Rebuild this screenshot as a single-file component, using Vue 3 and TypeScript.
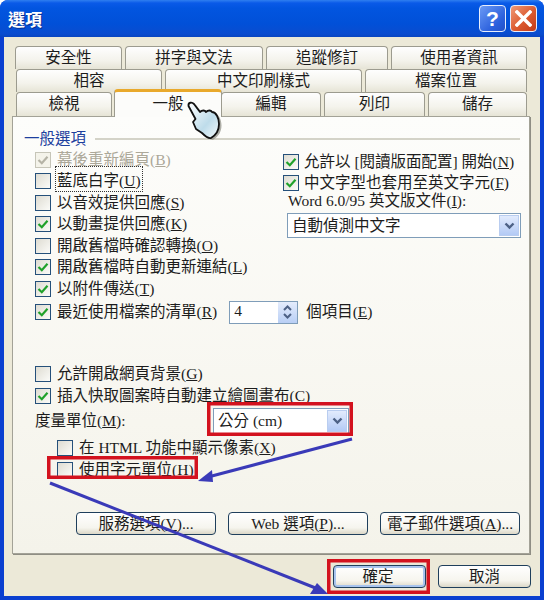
<template>
  <div class="window">
    <header class="titlebar">
      <span class="title">選項</span>
      <div class="title-buttons">
        <span class="cap help">?</span>
        <span class="cap close">
          <svg width="17" height="17" viewBox="0 0 17 17">
            <path d="M2 2 L15 15 M15 2 L2 15" stroke="#fff" stroke-width="3.4" stroke-linecap="square" />
          </svg>
        </span>
      </div>
    </header>

    <div class="client">
      <div class="tabs">
        <div v-for="(row, i) in tabRows" :key="i" :class="['tab-row', 'tab-row-' + i]">
          <div
            v-for="tab in row"
            :key="tab.label"
            :class="['tab', { active: tab.label === currentTab }]"
            :style="{ width: tab.width + 'px' }"
          >
            {{ tab.label }}
          </div>
        </div>
      </div>

      <section class="panel">
        <div class="legend">
          <span class="legend-text">一般選項</span>
          <i class="legend-line"></i>
        </div>

        <div class="top-grid">
          <div class="col">
            <label v-for="c in leftChecks" :key="c.text" :class="['check-row', { disabled: c.disabled }]">
              <span :class="['box', { off: c.disabled }]">
                <svg v-if="c.checked" width="12" height="12" viewBox="0 0 12 12">
                  <path d="M1.5 6 L4.8 9.2 L10.5 2.8" fill="none" stroke-width="2.2" />
                </svg>
              </span>
              <span :class="['txt', { focused: c.focused }]">{{ c.text }}(<u>{{ c.key }}</u>)</span>
            </label>
            <div class="check-row recent">
              <span class="box">
                <svg width="12" height="12" viewBox="0 0 12 12">
                  <path d="M1.5 6 L4.8 9.2 L10.5 2.8" fill="none" stroke-width="2.2" />
                </svg>
              </span>
              <span class="txt">最近使用檔案的清單(<u>R</u>)</span>
              <span class="spin-input">
                <span class="spin-value">4</span>
                <span class="spin">
                  <svg width="11" height="18" viewBox="0 0 11 18">
                    <path d="M2 7 L5.5 3.5 L9 7 M2 11 L5.5 14.5 L9 11" fill="none" stroke="#4d6185" stroke-width="2" />
                  </svg>
                </span>
              </span>
              <span class="txt recent-unit">個項目(<u>E</u>)</span>
            </div>
          </div>

          <div class="col right">
            <label v-for="c in rightChecks" :key="c.text" class="check-row">
              <span class="box">
                <svg width="12" height="12" viewBox="0 0 12 12">
                  <path d="M1.5 6 L4.8 9.2 L10.5 2.8" fill="none" stroke-width="2.2" />
                </svg>
              </span>
              <span class="txt">{{ c.text }}(<u>{{ c.key }}</u>)</span>
            </label>
            <div class="word-label">Word 6.0/95 英文版文件(<u>I</u>):</div>
            <div class="select word-select">
              <span class="txt">自動偵測中文字</span>
              <span class="select-btn">
                <svg width="11" height="8" viewBox="0 0 11 8">
                  <path d="M1.5 1.5 L5.5 5.5 L9.5 1.5" fill="none" stroke="#4d6185" stroke-width="2.4" />
                </svg>
              </span>
            </div>
          </div>
        </div>

        <div class="lower">
          <label class="check-row">
            <span class="box"></span>
            <span class="txt">允許開啟網頁背景(<u>G</u>)</span>
          </label>
          <label class="check-row">
            <span class="box">
              <svg width="12" height="12" viewBox="0 0 12 12">
                <path d="M1.5 6 L4.8 9.2 L10.5 2.8" fill="none" stroke-width="2.2" />
              </svg>
            </span>
            <span class="txt">插入快取圖案時自動建立繪圖畫布(<u>C</u>)</span>
          </label>
          <div class="unit-row">
            <span class="txt unit-label">度量單位(<u>M</u>):</span>
            <div class="select unit-select">
              <span class="txt">公分 (cm)</span>
              <span class="select-btn">
                <svg width="11" height="8" viewBox="0 0 11 8">
                  <path d="M1.5 1.5 L5.5 5.5 L9.5 1.5" fill="none" stroke="#4d6185" stroke-width="2.4" />
                </svg>
              </span>
            </div>
          </div>
          <label class="check-row indent first-indent">
            <span class="box"></span>
            <span class="txt">在 HTML 功能中顯示像素(<u>X</u>)</span>
          </label>
          <label class="check-row indent">
            <span class="box"></span>
            <span class="txt">使用字元單位(<u>H</u>)</span>
          </label>
        </div>

        <div class="panel-buttons">
          <button class="btn wide"><span class="txt">服務選項(<u>V</u>)...</span></button>
          <button class="btn wide"><span class="txt">Web 選項(<u>P</u>)...</span></button>
          <button class="btn wide"><span class="txt">電子郵件選項(<u>A</u>)...</span></button>
        </div>
      </section>

      <footer class="dialog-buttons">
        <button class="btn main default"><span class="txt">確定</span></button>
        <button class="btn main"><span class="txt">取消</span></button>
      </footer>
    </div>

    <!-- hand-drawn annotations on top of the dialog -->
    <svg class="notes" width="544" height="600" viewBox="0 0 544 600">
      <defs>
        <linearGradient id="hand" x1="0" y1="0" x2="1" y2="1">
          <stop offset="0" stop-color="#ffffff" />
          <stop offset="0.6" stop-color="#bedcea" />
          <stop offset="1" stop-color="#f4fafc" />
        </linearGradient>
      </defs>
      <g fill="none" stroke="#d3121e" stroke-width="3.5">
        <rect x="208.75" y="403.75" width="142.5" height="30.5" />
        <rect x="48.75" y="457.75" width="147.5" height="19.5" />
        <rect x="328.75" y="560.75" width="99.5" height="31.5" />
      </g>
      <g stroke="#3a3ab8" stroke-width="3" fill="#3a3ab8">
        <line x1="352" y1="439" x2="208" y2="477" />
        <line x1="50" y1="483" x2="318" y2="589" />
        <polygon stroke="none" points="198,481 212,470 213,482" />
        <polygon stroke="none" points="328,594 317,583 310,594" />
      </g>
      <!-- pointer hand -->
      <path
        d="M188.5 106 C188 102 192 102 194 104 L200 112 C202 110 205 110 206 112 C208 110 211 110 212 112 C216 112 219 118 219 124 C219 130 216 135 211 138 C208 139 205 136 202 133 L196 129 L193 122 L195.5 119 Z"
        fill="#7c7c72"
        opacity="0.6"
        transform="translate(2.5 1.5)"
      />
      <path
        d="M188.5 106 C188 102 192 102 194 104 L200 112 C202 110 205 110 206 112 C208 110 211 110 212 112 C216 112 219 118 219 124 C219 130 216 135 211 138 C208 139 205 136 202 133 L196 129 L193 122 L195.5 119 Z"
        fill="url(#hand)"
        stroke="#111"
        stroke-width="1.8"
        stroke-linejoin="round"
      />
    </svg>
  </div>
</template>

<script setup lang="ts">
import { ref } from "vue";

interface ITab {
  label: string;
  width: number;
}

interface ICheck {
  text: string;
  key: string;
  checked?: boolean;
  disabled?: boolean;
  focused?: boolean;
}

const currentTab = ref("一般");

const tabRows: ITab[][] = [
  [
    { label: "安全性", width: 107 },
    { label: "拼字與文法", width: 138 },
    { label: "追蹤修訂", width: 122 },
    { label: "使用者資訊", width: 136 },
  ],
  [
    { label: "相容", width: 146 },
    { label: "中文印刷樣式", width: 197 },
    { label: "檔案位置", width: 162 },
  ],
  [
    { label: "檢視", width: 96 },
    { label: "一般", width: 108 },
    { label: "編輯", width: 100 },
    { label: "列印", width: 101 },
    { label: "儲存", width: 99 },
  ],
];

const leftChecks: ICheck[] = [
  { text: "幕後重新編頁", key: "B", checked: true, disabled: true },
  { text: "藍底白字", key: "U", focused: true },
  { text: "以音效提供回應", key: "S" },
  { text: "以動畫提供回應", key: "K", checked: true },
  { text: "開啟舊檔時確認轉換", key: "O" },
  { text: "開啟舊檔時自動更新連結", key: "L", checked: true },
  { text: "以附件傳送", key: "T", checked: true },
];

const rightChecks: ICheck[] = [
  { text: "允許以 [閱讀版面配置] 開始", key: "N", checked: true },
  { text: "中文字型也套用至英文字元", key: "F", checked: true },
];
</script>

<style>
html,
body {
  margin: 0;
  background: #fff;
}
</style>

<style scoped>
.window {
  position: relative;
  width: 544px;
  height: 600px;
  overflow: hidden;
  font-family: "Liberation Serif", "Noto Sans CJK TC", serif;
  font-size: 15.5px;
  color: #1c1c1c;
  display: flex;
  flex-direction: column;
  background: #0a3fd0;
  border-radius: 8px 8px 0 0;
}

.titlebar {
  height: 37px;
  flex: none;
  display: flex;
  align-items: center;
  justify-content: space-between;
  padding: 0 7px 0 8px;
  box-sizing: border-box;
  background: linear-gradient(#2f7ff0 0, #0a5ae8 3px, #0255e0 8px, #0150d8 24px, #0a4ccf 34px, #0845c0 37px);
}

.title {
  font-family: "Noto Sans CJK TC", sans-serif;
  font-weight: 700;
  font-size: 17px;
  color: #fff;
  text-shadow: 1px 1px 0 #0a2f90;
}

.title-buttons {
  display: flex;
  gap: 4px;
}

.cap {
  width: 25px;
  height: 25px;
  border: 1px solid #e8eefc;
  border-radius: 4px;
  display: flex;
  align-items: center;
  justify-content: center;
  color: #fff;
  font-family: "Liberation Sans", sans-serif;
  font-weight: 700;
  font-size: 21px;
}

.help {
  background: linear-gradient(135deg, #6a9af5, #2a5fdc 70%, #2250c8);
}

.close {
  background: linear-gradient(135deg, #ef9a78, #dc5a30 55%, #c23a18);
}

.client {
  flex: 1;
  margin: 0 4px 4px;
  background: #ece9d8;
  padding-top: 9px;
  display: flex;
  flex-direction: column;
  min-height: 0;
}

.tabs {
  height: 70px;
  flex: none;
  display: flex;
  flex-direction: column;
}

.tab-row {
  display: flex;
  height: 23px;
  gap: 3px;
  margin-left: 12px;
}

.tab-row-0 {
  margin-left: 11px;
}

.tab-row-2 {
  height: 24px;
  gap: 0;
}

.tab {
  box-sizing: border-box;
  height: 100%;
  flex: none;
  text-align: center;
  line-height: 21px;
  background: linear-gradient(#fefefe, #f4f3ec 60%, #e6e4d6);
  border: 1px solid #9c9b8f;
  border-bottom: none;
  border-radius: 4px 4px 0 0;
}

.tab-row-2 .tab {
  margin-right: 3px;
}

.tab-row-2 .tab.active {
  position: relative;
  z-index: 2;
  height: 28px;
  margin: -3px -1px 0 -1px;
  background: #fcfcfa;
  border-top: 3px solid #e9a92c;
  line-height: 23px;
}

.panel {
  position: relative;
  height: 438px;
  flex: none;
  margin: 0 10px 0 8px;
  box-sizing: border-box;
  padding: 12px 9px 18px 22px;
  border: 1px solid #a3a297;
  box-shadow: 1px 1px 0 #8f8e84;
  background: linear-gradient(#fdfdfb, #f7f6ef 70%, #f4f3ea);
  display: flex;
  flex-direction: column;
}

.legend {
  height: 20px;
  margin-left: -11px;
  display: flex;
  align-items: center;
  gap: 9px;
  color: #1d3f9e;
}

.legend-text {
  padding-bottom: 4px;
}

.legend-line {
  flex: 1;
  height: 2px;
  background: #d4d3c8;
}

.top-grid {
  display: grid;
  grid-template-columns: 248px 1fr;
}

.col {
  display: flex;
  flex-direction: column;
  min-width: 0;
}

.txt {
  position: relative;
  top: -2px;
}

.check-row {
  height: 21.5px;
  display: flex;
  align-items: center;
  gap: 6px;
  white-space: nowrap;
}

.check-row.disabled {
  color: #aca899;
}

.box {
  box-sizing: border-box;
  width: 16px;
  height: 16px;
  flex: none;
  border: 1.5px solid #25507a;
  background: linear-gradient(135deg, #dedcd2, #fbfbf8);
  display: flex;
  align-items: center;
  justify-content: center;
}

.box svg {
  stroke: #1fa12a;
}

.box.off {
  border-color: #c6c5b8;
  background: #f4f3ea;
}

.box.off svg {
  stroke: #b5b3a6;
}

.focused {
  outline: 1px dotted #333;
  outline-offset: 1px;
}

.recent {
  height: 23px;
  margin-top: 1px;
}

.spin-input {
  box-sizing: border-box;
  width: 69px;
  height: 23px;
  margin-left: 6px;
  flex: none;
  border: 1px solid #7f9db9;
  background: #fff;
  display: flex;
  align-items: stretch;
  justify-content: space-between;
}

.spin-value {
  padding-left: 4px;
  line-height: 18px;
}

.spin {
  width: 19px;
  background: linear-gradient(#e4ecfc, #b9cff5);
  display: flex;
  align-items: center;
  justify-content: center;
}

.recent-unit {
  margin-left: 2px;
}

.right {
  padding-top: 2px;
}

.right .word-label {
  height: 18px;
  line-height: 16px;
  margin-left: 5px;
  white-space: nowrap;
}

.right .check-row {
  height: 21px;
  gap: 5px;
}

.select {
  box-sizing: border-box;
  border: 1px solid #7f9db9;
  background: #fff;
  display: flex;
  align-items: center;
  justify-content: space-between;
  padding: 1px 1px 1px 4px;
}

.word-select {
  width: 234px;
  height: 25px;
  margin-left: 4px;
  margin-top: 2px;
}

.select-btn {
  box-sizing: border-box;
  width: 20px;
  height: 100%;
  border: 1px solid #b9cdf0;
  background: linear-gradient(#e2ebfd, #b3caf5);
  display: flex;
  align-items: center;
  justify-content: center;
}

.lower {
  margin-top: 40px;
  display: flex;
  flex-direction: column;
}

.unit-row {
  height: 26px;
  margin-top: 1px;
  display: flex;
  align-items: center;
}

.unit-label {
  width: 178px;
  flex: none;
}

.unit-select {
  width: 136px;
  height: 26px;
}

.indent {
  margin-left: 22px;
}

.first-indent {
  margin-top: 4px;
}

.panel-buttons {
  margin-top: auto;
  display: flex;
  justify-content: flex-end;
  gap: 12px;
}

.btn {
  box-sizing: border-box;
  font: inherit;
  color: inherit;
  padding: 0;
  height: 23px;
  border: 1px solid #1f3f5c;
  border-radius: 4px;
  background: linear-gradient(#ffffff, #f6f5ee 70%, #dcd8c8);
  white-space: nowrap;
}

.wide {
  width: 140px;
}

.dialog-buttons {
  margin-top: 11px;
  padding-right: 9px;
  display: flex;
  justify-content: flex-end;
  gap: 12px;
}

.main {
  width: 93px;
}

.default {
  padding-right: 3px;
  box-shadow: inset 0 0 0 2px #a8c4ee;
}

.notes {
  position: absolute;
  left: 0;
  top: 0;
  z-index: 5;
  pointer-events: none;
}
</style>
